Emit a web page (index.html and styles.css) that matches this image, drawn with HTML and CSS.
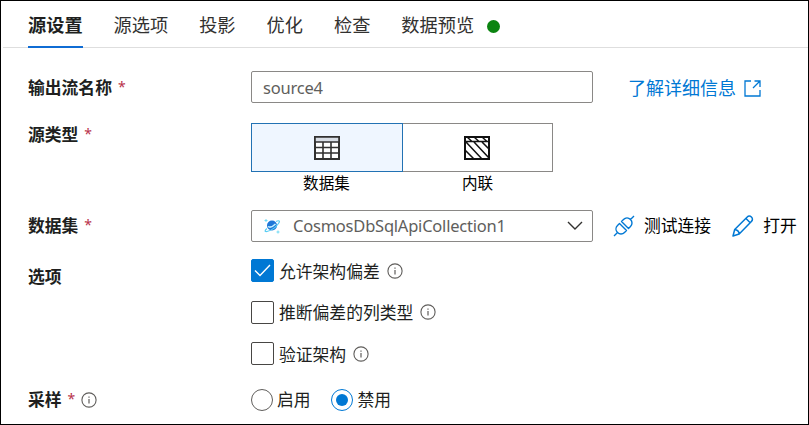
FILE: index.html
```html
<!DOCTYPE html>
<html lang="zh-CN">
<head>
<meta charset="utf-8">
<title>源设置</title>
<link rel="stylesheet" href="styles.css">
</head>
<body>
<svg class="defs" aria-hidden="true">
  <symbol id="info" viewBox="0 0 16 16"><circle cx="8" cy="8" r="7.1" fill="none" stroke="#605e5c" stroke-width="1.1"/><path d="M8 7v4.500M8 4.500v1.300" stroke="#605e5c" stroke-width="1.200"/></symbol>
</svg>
<main class="panel">
  <nav class="tabs">
    <a class="tab active">源设置</a>
    <a class="tab">源选项</a>
    <a class="tab">投影</a>
    <a class="tab">优化</a>
    <a class="tab">检查</a>
    <a class="tab">数据预览<span class="status"></span></a>
  </nav>
  <form class="form">
    <div class="row name-row">
      <div class="label">输出流名称<span class="req">*</span></div>
      <div class="field name-field"><span>source4</span></div>
      <a class="learn">了解详细信息<svg width="17" height="17" viewBox="0 0 17 17" fill="none" stroke="#0078d4" stroke-width="1.3"><path d="M7 1H1v15h15v-6M10.5 1H16v6M16 1L9 8"/></svg></a>
    </div>
    <div class="row type-row">
      <div class="label">源类型<span class="req">*</span></div>
      <div class="types">
        <div class="type">
          <div class="tile selected"><svg width="26" height="24" viewBox="0 0 26 24" fill="none" stroke="#323130"><path fill="#fff" stroke-width="2" d="M1 1h24v22H1z"/><path fill="#d8dde5" stroke-width="1.6" d="M1 1h24v5H1z"/><path stroke-width="1.6" d="M1 11.500h24M1 17h24M9 6v17M17 6v17"/></svg></div>
          <div class="caption">数据集</div>
        </div>
        <div class="type">
          <div class="tile plain"><svg width="26" height="24" viewBox="0 0 26 24" fill="none" stroke="#111"><path stroke-width="2" d="M1 1h24v22H1z"/><path stroke-width="1.500" d="M1 5.500h24M3 1l5 4.500M10 1l5 4.500M18 1l5 4.500M1 14l9 9M2 6l16 17M10 6l15 16M18 6l7 7"/></svg></div>
          <div class="caption">内联</div>
        </div>
      </div>
    </div>
    <div class="row data-row">
      <div class="label">数据集<span class="req">*</span></div>
      <div class="field select">
        <svg class="cosmos" width="16" height="16" viewBox="0 0 16 16"><circle cx="8" cy="7.500" r="5" fill="#1f78d8"/><path d="M4 8.500Q7 10.500 11.500 6" fill="none" stroke="#c4f1ff" stroke-width="1.500"/><path d="M12 3.500C15 2 16.500 3 14.500 5.500 12 9 7 12.500 3 13.500.5 14 .5 12.500 3 10.500" fill="none" stroke="#58cdf3" stroke-width="1.200"/><path d="M2 1v3M.5 2.500h3M14 12.500v3M12.500 14h3" stroke="#65d7f4" stroke-width=".9"/></svg>
        <span class="dataset">CosmosDbSqlApiCollection1</span>
        <svg class="chevron" width="16" height="10" viewBox="0 0 16 10" fill="none" stroke="#323130" stroke-width="1.400"><path d="M1 1l7 7 7-7"/></svg>
      </div>
      <a class="action test"><svg width="22" height="22" viewBox="0 0 22 22" fill="none" stroke="#0078d4" stroke-width="1.400" stroke-linejoin="round"><path d="M1 21l3.500-3.500M17.500 4.500L21 1M4.500 17.500c-2-2-2-5 0-7l2-2 7 7-2 2c-2 2-5 2-7 0zM17.500 4.500c2 2 2 5 0 7l-2 2-7-7 2-2c2-2 5-2 7 0z"/></svg>测试连接</a>
      <a class="action open"><svg width="22" height="22" viewBox="0 0 22 22" fill="none" stroke="#0078d4" stroke-width="1.500" stroke-linejoin="round"><path d="M1 21l1.700-6.500L15 2.200c1.300-1.300 3-1.500 4.400-.2 1.500 1.500 1.200 3.300 0 4.500L7.200 19 1 21zM2.700 14.500c2.500.3 4.200 1.800 4.500 4.500M14 3.500L18.200 7.800"/></svg>打开</a>
    </div>
    <div class="row options-row">
      <div class="label">选项</div>
      <div class="options">
        <label class="option"><span class="check on"><svg width="17" height="13" viewBox="0 0 17 13" fill="none" stroke="#fff" stroke-width="1.400"><path d="M1 6.500l5 5L16 1"/></svg></span><span class="text">允许架构偏差</span><svg class="info"><use href="#info"/></svg></label>
        <label class="option"><span class="check"></span><span class="text">推断偏差的列类型</span><svg class="info"><use href="#info"/></svg></label>
        <label class="option"><span class="check"></span><span class="text">验证架构</span><svg class="info"><use href="#info"/></svg></label>
      </div>
    </div>
    <div class="row sample-row">
      <div class="label">采样<span class="req">*</span><svg class="info"><use href="#info"/></svg></div>
      <div class="radios">
        <label class="choice"><span class="radio"></span><span>启用</span></label>
        <label class="choice"><span class="radio on"></span><span>禁用</span></label>
      </div>
    </div>
  </form>
</main>
</body>
</html>
```
FILE: styles.css
```css
* { box-sizing: border-box; }
body { margin: 0; background: #fff; }
svg { flex: none; display: block; }
.defs { display: none; }
.panel {
  width: 809px;
  height: 425px;
  border: 1px solid #000;
  overflow: hidden;
  color: #201f1e;
  font-family: "Noto Sans", "Noto Sans CJK SC", sans-serif;
  font-size: 16.8px;
  line-height: 24px;
  white-space: nowrap;
}
.tabs {
  display: flex;
  gap: 31px;
  height: 47px;
  margin-left: 2px;
  padding-left: 25px;
  border-bottom: 1px solid #dedede;
  font-size: 18.2px;
}
.tab { display: flex; align-items: center; height: 46px; padding-top: 1px; color: #323130; }
.tab.active { height: 47px; border-bottom: 2px solid #0f6cd4; font-weight: 700; color: #201f1e; padding-top: 2px; }
.status { width: 13px; height: 13px; margin: 3px 0 0 13px; border-radius: 50%; background: #0b8410; }
.form { padding: 23px 0 0 27px; }
.row { display: flex; }
.label { display: flex; align-items: center; flex: 0 0 223px; font-weight: 700; }
.req { margin: -2px 0 0 6px; color: #b8324a; font-weight: 400; font-size: 14px; }
.name-row, .data-row { align-items: center; height: 32px; }
.name-row .label, .learn { padding-top: 2px; }
.field {
  display: flex;
  align-items: center;
  width: 342px;
  height: 32px;
  border: 1px solid #8a8886;
  border-radius: 2px;
  padding-left: 11px;
  color: #605e5c;
  font-family: "Noto Sans", sans-serif;
  font-size: 16.5px;
  letter-spacing: -0.22px;
}
.name-field { padding-top: 2px; }
.learn { display: flex; align-items: center; gap: 8px; margin-left: 35px; color: #0078d4; font-size: 18px; }
.type-row { margin-top: 20px; height: 72px; }
.type-row .label { height: 24px; }
.types { display: flex; }
.type { width: 151px; text-align: center; }
.tile { display: flex; align-items: center; justify-content: center; height: 49px; border: 1px solid #8a8886; }
.tile.selected { width: 152px; background: #eff6ff; border-color: #2272b4; padding-right: 1px; }
.tile.plain { border-left: 0; margin-left: 1px; padding-right: 2px; }
.caption { font-size: 15.6px; line-height: 22px; color: #000; }
.data-row { margin-top: 15px; }
.select { padding-left: 12px; }
.dataset { margin-left: 13px; }
.chevron { margin: 0 9px 0 auto; }
.action { display: flex; align-items: center; gap: 9px; color: #000; }
.test { margin-left: 20px; }
.open { margin-left: 21px; }
.options-row { margin-top: 17px; }
.options-row .label { height: 36px; }
.options { display: flex; flex-direction: column; gap: 18px; }
.option { display: flex; align-items: center; height: 23.5px; }
.text { padding-top: 2px; }
.check { display: flex; align-items: center; justify-content: center; width: 23px; height: 23px; margin-right: 5px; border: 1px solid #484644; border-radius: 2px; }
.check.on { background: #0078d4; border-color: #0078d4; }
.info { width: 16px; height: 16px; margin-left: 6px; }
.option .info { margin-left: 7px; }
.sample-row { margin-top: 22px; }
.radios { display: flex; gap: 20px; }
.choice { display: flex; align-items: center; }
.radio { display: flex; align-items: center; justify-content: center; width: 22px; height: 22px; margin-right: 4px; border: 1px solid #605e5c; border-radius: 50%; }
.radio.on { border-color: #0078d4; margin-right: 5px; }
.radio.on::after { content: ""; width: 12px; height: 12px; border-radius: 50%; background: #0078d4; }
```
